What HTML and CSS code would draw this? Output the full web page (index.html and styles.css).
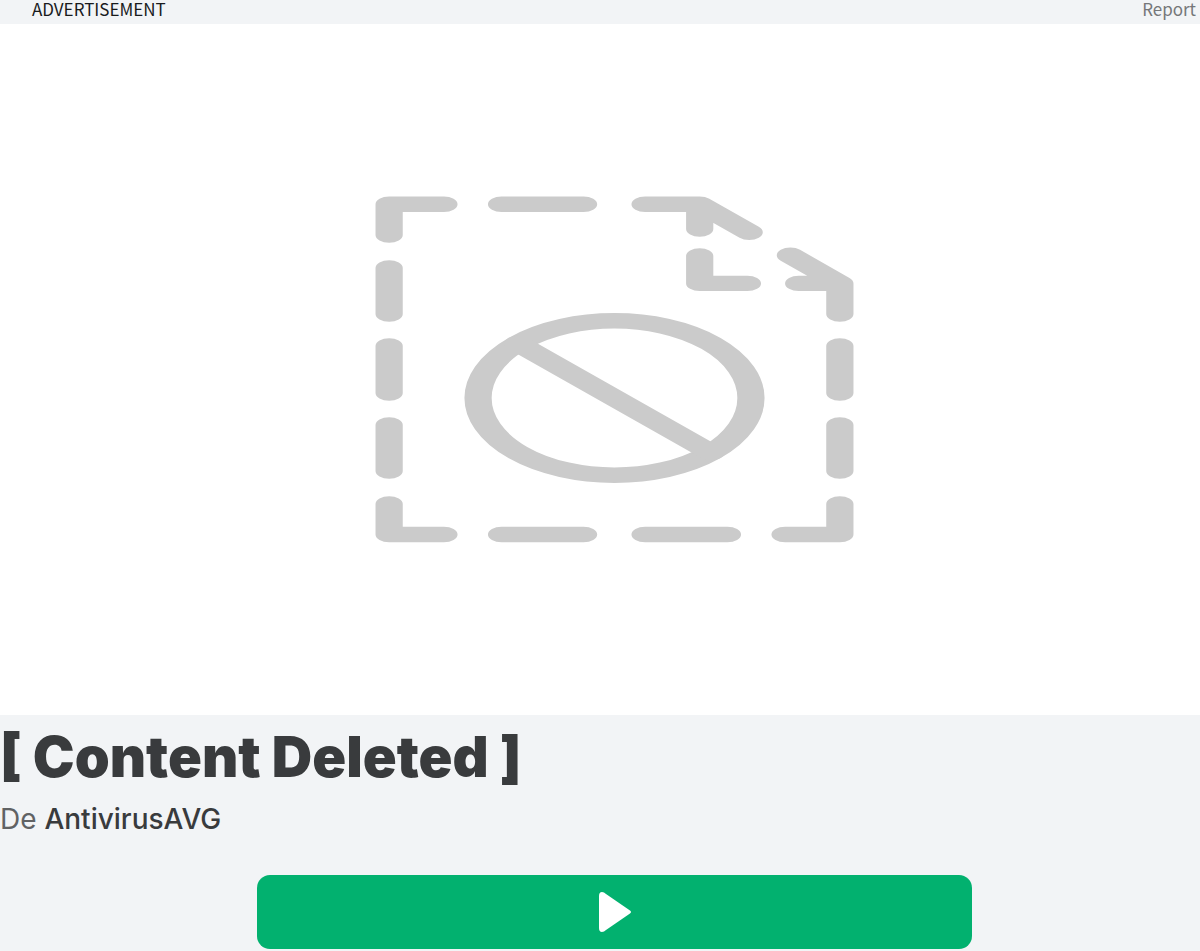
FILE: index.html
```html
<!DOCTYPE html>
<html lang="es">
<head>
<meta charset="utf-8">
<meta name="viewport" content="width=device-width, initial-scale=1">
<title>[ Content Deleted ]</title>
<link rel="stylesheet" href="styles.css">
</head>
<body>
<header class="ad-bar">
  <span class="ad-label">ADVERTISEMENT</span>
  <a class="ad-report" href="#report">Report</a>
</header>
<main>
  <div class="thumbnail">
    <svg class="deleted-icon" viewBox="0 0 271 347" preserveAspectRatio="none" role="img" aria-label="Content deleted">
      <path d="M8 39V8.200H39M71.600 8.200H118M152.800 8.200H183.700V33M183.700 8.200L211.700 36.200M183.700 60V87.400H210.700M235 59.200L263 87.400V118M239.700 87.400H263"/>
      <path d="M8 72V118M8 150V197M8 229V275M8 308V338.500H39M71.600 338.500H118M152.800 338.500H199.400M232 338.500H263V308M263 275V229M263 197V150"/>
      <circle cx="135.500" cy="202" r="77.200"/>
      <path d="M81 147.500L190 256.500"/>
    </svg>
  </div>
  <section class="details">
    <h1 class="title">[ Content Deleted ]</h1>
    <p class="byline">De <a class="author" href="#author">AntivirusAVG</a></p>
    <div class="actions">
      <button class="play" type="button" aria-label="Play">
        <svg class="play-icon" viewBox="0 0 32 40" aria-hidden="true"><path d="M0 4Q0 0 3 0Q5 0 7 2L31 18.500Q33 20 31 21.500L7 38Q5 40 3 40Q0 40 0 36Z"/></svg>
      </button>
    </div>
  </section>
</main>
</body>
</html>
```
FILE: styles.css
```css
* { box-sizing: border-box; }
body {
  margin: 0;
  background: #f2f4f6;
  color: #393b3d;
  font-family: Inter, "Liberation Sans", sans-serif;
}
a { color: inherit; text-decoration: none; }
.ad-bar {
  display: flex;
  justify-content: space-between;
  height: 24px;
  padding: 0 4px 0 32px;
  font-family: "Noto Sans CJK SC", "Noto Sans", sans-serif;
  font-size: 17px;
  line-height: 18px;
}
.ad-label { color: #191b1d; }
.ad-report { color: #757779; }
.thumbnail {
  display: flex;
  justify-content: center;
  padding: 172px 0 172px 29px;
  background: #fff;
}
.deleted-icon {
  width: 479px;
  height: 347px;
  fill: none;
  stroke: #cbcbcb;
  stroke-width: 15.400px;
  stroke-linecap: round;
  stroke-linejoin: round;
}
.details { padding-top: 10px; }
.title {
  margin: 0;
  font-size: 56px;
  font-weight: 900;
  line-height: 64px;
}
.byline {
  margin: 14px 0 0;
  color: #606264;
  font-size: 28px;
  line-height: 32px;
}
.author { color: #393b3d; font-weight: 500; }
.actions {
  display: flex;
  justify-content: center;
  padding: 40px 0 0 29px;
}
.play {
  display: flex;
  align-items: center;
  justify-content: center;
  width: 61%;
  height: 74px;
  padding: 0 0 0 2px;
  border: 0;
  border-radius: 13px;
  background: #02b16f;
}
.play-icon { width: 32px; height: 40px; fill: #fff; }
```
